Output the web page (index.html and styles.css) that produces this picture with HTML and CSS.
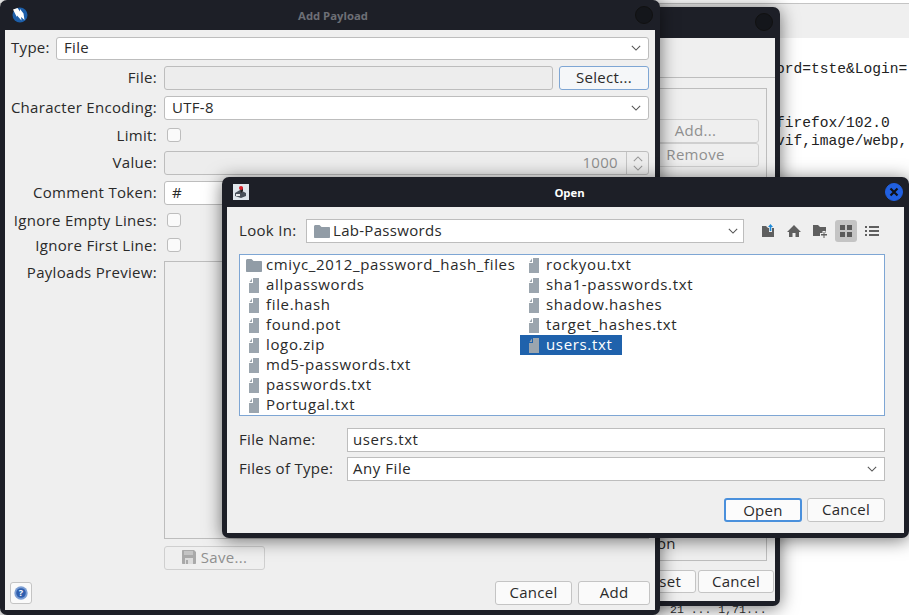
FILE: index.html
```html
<!DOCTYPE html>
<html>
  <head>
    <meta charset="utf-8">
    <title>Add Payload</title>
    <link rel="stylesheet" href="styles.css">
  </head>
  <body>
    <svg class="defs" width="0" height="0">
      <symbol id="i-file" viewBox="0 0 10 15">
        <path d="M4 0h6v15H0V5h4z" fill="#9ba5ae"/>
        <path d="M3 .5L.5 4H3z" fill="#9ba5ae"/>
      </symbol>
      <symbol id="i-folder" viewBox="0 0 16 13">
        <path d="M0 1.500C0 .7.7 0 1.500 0h4L7.500 2H15c.6 0 1 .4 1 1v9c0 .6-.4 1-1 1H1c-.6 0-1-.4-1-1z" fill="#919ca6"/>
      </symbol>
      <symbol id="i-chev" viewBox="0 0 12 7">
        <path d="M1 1l5 5 5-5" fill="none" stroke="#555" stroke-width="1.300"/>
      </symbol>
    </svg>

    <div class="editor">
      <div class="editor-top"></div>
      <pre class="editor-text">ord=tste&amp;Login=


firefox/102.0
vif,image/webp,</pre>
      <div class="editor-status">21 ... 1,71...</div>
    </div>

    <!-- window behind -->
    <div class="win win-back">
      <div class="titlebar">
        <span class="dot"></span>
      </div>
      <div class="back-body">
        <div class="back-top"></div>
        <div class="back-group">
          <div class="back-btns">
            <button class="btn off back-btn">Add...</button>
            <button class="btn off back-btn">Remove</button>
          </div>
          <div class="back-on">on</div>
        </div>
        <div class="back-foot">
          <button class="btn btn-reset">Reset</button>
          <button class="btn btn-back-cancel">Cancel</button>
        </div>
      </div>
    </div>

    <!-- add payload -->
    <div class="win win-add">
      <div class="titlebar">
        <svg class="logo" width="16" height="16" viewBox="0 0 16 16">
          <circle cx="8" cy="8" r="7.500" fill="#1d5ea8"/>
          <path d="M1 2.500L5.500 1l2.500 3.500L8 2l3.500 4.500 1 6.500-3.500-3 .5 3.500L5 8.500 4.800 10z" fill="#fff"/>
        </svg>
        <span class="title title-dim">Add Payload</span>
        <span class="dot"></span>
      </div>
      <div class="add-body">
        <div class="row-type">
          <label class="lbl-type">Type:</label>
          <div class="field combo">File<svg class="chev"><use href="#i-chev"/></svg></div>
        </div>
        <div class="form">
          <label class="lbl">File:</label>
          <div class="file-row">
            <div class="field off grow"></div>
            <button class="btn btn-select">Select...</button>
          </div>
          <label class="lbl">Character Encoding:</label>
          <div class="field combo">UTF-8<svg class="chev"><use href="#i-chev"/></svg></div>
          <label class="lbl lbl-check">Limit:</label>
          <div class="check-cell"><span class="check"></span></div>
          <label class="lbl">Value:</label>
          <div class="field off spin">
            <span class="spin-val">1000</span>
            <span class="spin-btns">
              <svg width="10" height="6" viewBox="0 0 12 7"><path d="M1 6l5-5 5 5" fill="none" stroke="#999" stroke-width="1.300"/></svg>
              <svg width="10" height="6" viewBox="0 0 12 7"><path d="M1 1l5 5 5-5" fill="none" stroke="#999" stroke-width="1.300"/></svg>
            </span>
          </div>
          <label class="lbl">Comment Token:</label>
          <div class="field">#</div>
          <label class="lbl lbl-check">Ignore Empty Lines:</label>
          <div class="check-cell"><span class="check"></span></div>
          <label class="lbl lbl-check">Ignore First Line:</label>
          <div class="check-cell"><span class="check"></span></div>
          <label class="lbl">Payloads Preview:</label>
          <div class="preview"></div>
          <span></span>
          <div>
            <button class="btn off btn-save">
              <svg width="14" height="14" viewBox="0 0 14 14">
                <path d="M0 1c0-.6.4-1 1-1h11l2 2v11c0 .6-.4 1-1 1H1c-.6 0-1-.4-1-1z" fill="#a9a9a9"/>
                <path d="M2 1h9v4H2z" fill="#c4c4c4"/>
                <path d="M3 8h8v6H3z" fill="#dcdcdc"/>
                <path d="M4 10h2v4H4z" fill="#a9a9a9"/>
              </svg>
              Save...
            </button>
          </div>
        </div>
        <div class="add-foot">
          <button class="btn btn-help">
            <svg width="14" height="14" viewBox="0 0 14 14">
              <circle cx="7" cy="7" r="6.700" fill="#7d9fd4"/>
              <circle cx="7" cy="7" r="4.800" fill="#2f5fae"/>
              <text x="7" y="10.300" class="help-q">?</text>
            </svg>
          </button>
          <span class="grow"></span>
          <button class="btn btn-cancel">Cancel</button>
          <button class="btn btn-add">Add</button>
        </div>
      </div>
    </div>

    <!-- file chooser -->
    <div class="win win-open">
      <div class="titlebar">
        <svg class="logo-java" width="16" height="16" viewBox="0 0 16 16">
          <rect width="16" height="16" fill="#dfe6ec"/>
          <path d="M2 9l5-3 6 3v3l-5 2-6-2z" fill="#4a525c"/>
          <path d="M3 10h4v2H3z" fill="#e8eaec"/>
          <path d="M7 5l2-2 1 1v3l-2 2z" fill="#222"/>
          <circle cx="8" cy="4" r="2" fill="#d8202a"/>
        </svg>
        <span class="title title-open">Open</span>
        <span class="dot dot-close">
          <svg width="10" height="10" viewBox="0 0 10 10"><path d="M1.500 1.500l7 7m0-7l-7 7" stroke="#101218" stroke-width="2.200"/></svg>
        </span>
      </div>
      <div class="open-body">
        <div class="look-row">
          <label class="lbl-look">Look In:</label>
          <div class="field combo combo-look">
            <svg class="ic-folder"><use href="#i-folder"/></svg>Lab-Passwords<svg class="chev"><use href="#i-chev"/></svg>
          </div>
          <div class="tools">
            <svg class="tool" viewBox="0 0 16 16">
              <path d="M2 3h4l2 2h6v9H2z" fill="#5f5f5f"/>
              <path d="M10.500 0L14 4h-2v5H9V4H7z" fill="#efefef"/>
              <path d="M10.500 1L13 4h-1.700v4H9.700V4H8z" fill="#1f8ad8"/>
            </svg>
            <svg class="tool" viewBox="0 0 16 16">
              <path d="M8 2L1 9h2v5h3.500v-4h3v4H13V9h2z" fill="#5f5f5f"/>
            </svg>
            <svg class="tool" viewBox="0 0 16 16">
              <path d="M1 2h5l2 2h6v9H1z" fill="#5f5f5f"/>
              <path d="M10.500 8h3v2H16v3.500h-2.500V16h-3v-2.500H8V10h2.500z" fill="#efefef"/>
              <path d="M11.500 9h1v2h2.500v1.500h-2.500V15h-1v-2.500H9V11h2.500z" fill="#5f5f5f"/>
            </svg>
            <span class="tool-on">
              <svg class="tool" viewBox="0 0 16 16">
                <path d="M2 2h5v5H2zM9 2h5v5H9zM2 9h5v5H2zM9 9h5v5H9z" fill="#5a5a5a"/>
              </svg>
            </span>
            <svg class="tool" viewBox="0 0 16 16">
              <path d="M1 3h2v2H1zM5 3h10v2H5zM1 7h2v2H1zM5 7h10v2H5zM1 11h2v2H1zM5 11h10v2H5z" fill="#5f5f5f"/>
            </svg>
          </div>
        </div>
        <div class="files">
          <div class="item"><svg class="ic-dir"><use href="#i-folder"/></svg>cmiyc_2012_password_hash_files</div>
          <div class="item"><svg class="ic-file"><use href="#i-file"/></svg>allpasswords</div>
          <div class="item"><svg class="ic-file"><use href="#i-file"/></svg>file.hash</div>
          <div class="item"><svg class="ic-file"><use href="#i-file"/></svg>found.pot</div>
          <div class="item"><svg class="ic-file"><use href="#i-file"/></svg>logo.zip</div>
          <div class="item"><svg class="ic-file"><use href="#i-file"/></svg>md5-passwords.txt</div>
          <div class="item"><svg class="ic-file"><use href="#i-file"/></svg>passwords.txt</div>
          <div class="item"><svg class="ic-file"><use href="#i-file"/></svg>Portugal.txt</div>
          <div class="item"><svg class="ic-file"><use href="#i-file"/></svg>rockyou.txt</div>
          <div class="item"><svg class="ic-file"><use href="#i-file"/></svg>sha1-passwords.txt</div>
          <div class="item"><svg class="ic-file"><use href="#i-file"/></svg>shadow.hashes</div>
          <div class="item"><svg class="ic-file"><use href="#i-file"/></svg>target_hashes.txt</div>
          <div class="item selected"><svg class="ic-file"><use href="#i-file"/></svg>users.txt</div>
        </div>
        <div class="name-grid">
          <label>File Name:</label>
          <div class="field field-plain">users.txt</div>
          <label>Files of Type:</label>
          <div class="field combo field-plain">Any File<svg class="chev"><use href="#i-chev"/></svg></div>
        </div>
        <div class="open-foot">
          <button class="btn btn-open">Open</button>
          <button class="btn btn-open-cancel">Cancel</button>
        </div>
      </div>
    </div>
  </body>
</html>
```

FILE: styles.css
```css
* {
  box-sizing: border-box;
}
html, body {
  margin: 0;
  height: 100%;
}
body {
  position: relative;
  width: 909px;
  height: 615px;
  overflow: hidden;
  background: #fff;
  font-family: "Open Sans", sans-serif;
  font-size: 15px;
  letter-spacing: 0.3px;
  color: #2a2a2a;
}
.defs {
  position: absolute;
}

/* editor behind everything */
.editor {
  height: 100%;
  padding-top: 3px;
}
.editor-top {
  height: 35px;
  border-top: 1px solid #c4c4c4;
  background: #efefef;
}
.editor-text {
  margin: 22px 0 0 776px;
  font-family: "Liberation Mono", monospace;
  font-size: 14.6px;
  letter-spacing: 0;
  line-height: 18px;
  color: #222;
}
.editor-status {
  position: absolute;
  left: 670px;
  top: 603px;
  font-family: "Liberation Mono", monospace;
  font-size: 11.5px;
  letter-spacing: 0;
  color: #333;
}

/* windows */
.win {
  position: absolute;
  display: flex;
  flex-direction: column;
  background: #1d1f27;
  border-radius: 7px;
  padding: 0 5px 5px;
  box-shadow: 0 2px 18px rgba(0, 0, 0, 0.55);
}
.win-back {
  left: 400px;
  top: 7px;
  width: 380px;
  height: 599px;
}
.win-add {
  left: 0;
  top: 0;
  width: 660px;
  height: 615px;
}
.win-open {
  left: 222px;
  top: 177px;
  width: 687px;
  height: 361px;
}
.titlebar {
  flex: none;
  position: relative;
  height: 30px;
  display: flex;
  align-items: center;
  justify-content: center;
}
.win-back .titlebar {
  height: 31px;
}
.title {
  font-size: 11.3px;
  font-weight: 700;
  letter-spacing: 0;
  color: #fff;
}
.title-dim {
  margin-left: 6px;
  color: #6d6f76;
}
.title-open {
  margin-left: 8px;
}
.dot {
  position: absolute;
  right: 2px;
  top: 6px;
  width: 18px;
  height: 18px;
  border-radius: 50%;
  background: #14161b;
  border: 1px solid #111;
  display: flex;
  align-items: center;
  justify-content: center;
}
.dot-close {
  background: #2160e0;
  border-color: #2160e0;
  right: 1px;
}
.logo {
  position: absolute;
  left: 7px;
  top: 7px;
}
.logo-java {
  position: absolute;
  left: 6px;
  top: 7px;
}

/* shared controls */
.field {
  height: 24px;
  display: flex;
  align-items: center;
  padding: 0 7px 2px;
  background: #fff;
  border: 1px solid #bdbdbd;
  border-radius: 3px;
}
.field.off {
  background: #ededed;
}
.combo {
  justify-content: space-between;
}
.chev {
  width: 10px;
  height: 6px;
  flex: none;
  position: relative;
  top: 1px;
}
.btn {
  height: 24px;
  padding: 0 0 2px;
  font: inherit;
  letter-spacing: inherit;
  color: #2a2a2a;
  background: #fafafa;
  border: 1px solid #c4c4c4;
  border-radius: 3px;
}
.btn.off {
  color: #8f8f8f;
  background: #efefef;
  border-color: #cfcfcf;
}
.grow {
  flex: 1;
}

/* add payload */
.add-body {
  flex: 1;
  display: flex;
  flex-direction: column;
  background: #efefef;
  padding: 7px 5px 5px;
}
.row-type {
  display: flex;
  align-items: center;
  padding-right: 1px;
}
.lbl-type {
  width: 46px;
  padding: 0 0 3px 1px;
}
.row-type .combo {
  flex: 1;
  height: 23px;
  padding-bottom: 3px;
}
.form {
  display: grid;
  grid-template-columns: 147px 485px;
  column-gap: 7px;
  row-gap: 6px;
  margin-top: 6px;
}
.lbl {
  text-align: right;
  line-height: 22px;
  white-space: nowrap;
}
.lbl-check {
  line-height: 18px;
}
.file-row {
  display: flex;
  gap: 6px;
}
.btn-select {
  width: 90px;
  background: #f5f7f9;
  border-color: #7ea6d4;
}
.check-cell {
  height: 19px;
  padding: 2px 0 0 3px;
}
.check {
  display: block;
  width: 14px;
  height: 14px;
  background: #fafafa;
  border: 1px solid #bdbdbd;
  border-radius: 3px;
}
.spin {
  justify-content: flex-end;
  padding: 0;
  color: #8f8f8f;
}
.spin-val {
  padding: 0 8px 2px 0;
}
.spin-btns {
  align-self: stretch;
  width: 22px;
  border-left: 1px solid #c4c4c4;
  display: flex;
  flex-direction: column;
  align-items: center;
  justify-content: center;
  gap: 3px;
}
.preview {
  height: 278px;
  background: #efefef;
  border: 1px solid #bdbdbd;
}
.btn-save {
  margin-top: 1px;
  width: 101px;
  display: flex;
  align-items: center;
  justify-content: center;
  gap: 5px;
}
.add-foot {
  display: flex;
  align-items: center;
  gap: 6px;
  margin-top: 11px;
}
.btn-help {
  width: 22px;
  height: 22px;
  padding: 0;
  display: flex;
  align-items: center;
  justify-content: center;
}
.help-q {
  font-size: 9px;
  font-weight: 700;
  fill: #fff;
  text-anchor: middle;
}
.btn-cancel {
  width: 77px;
}
.btn-add {
  width: 72px;
}

/* window behind */
.back-body {
  flex: 1;
  display: flex;
  flex-direction: column;
  align-items: flex-end;
  background: #efefef;
}
.back-top {
  align-self: stretch;
  height: 40px;
  border-bottom: 1px solid #bdbdbd;
}
.back-group {
  width: 360px;
  height: 473px;
  margin: 10px 8px 0 0;
  border: 1px solid #bdbdbd;
  border-left: 0;
  padding: 30px 7px 0 0;
  display: flex;
  flex-direction: column;
  align-items: flex-end;
  justify-content: space-between;
}
.back-btns {
  display: flex;
  flex-direction: column;
}
.back-btn {
  width: 127px;
}
.back-on {
  align-self: stretch;
  padding-left: 250px;
  padding-bottom: 7px;
}
.back-foot {
  display: flex;
  gap: 2px;
  margin: 9px 1px 0 0;
}
.back-foot .btn {
  height: 23px;
}
.btn-reset {
  width: 70px;
}
.btn-back-cancel {
  width: 76px;
}

/* file chooser */
.open-body {
  flex: 1;
  display: flex;
  flex-direction: column;
  background: #efefef;
  padding: 12px 19px 0 12px;
}
.look-row {
  display: flex;
  align-items: center;
}
.lbl-look {
  width: 67px;
  padding-bottom: 2px;
}
.combo-look {
  width: 438px;
  justify-content: flex-start;
  border-radius: 0;
}
.combo-look .chev {
  margin-left: auto;
  margin-right: -2px;
}
.ic-folder {
  width: 16px;
  height: 13px;
  margin-right: 3px;
  position: relative;
  top: 1px;
}
.tools {
  display: flex;
  align-items: center;
  gap: 10px;
  margin-left: 16px;
}
.tool {
  display: block;
  width: 16px;
  height: 16px;
}
.tool-on {
  padding: 3px;
  margin: -3px;
  background: #c4c4c4;
  border-radius: 3px;
}
.files {
  height: 162px;
  margin-top: 11px;
  display: grid;
  grid-template-rows: repeat(8, 20px);
  grid-auto-flow: column;
  grid-template-columns: 280px auto;
  justify-content: start;
  justify-items: start;
  background: #fff;
  border: 1px solid #7ea6d4;
  letter-spacing: 0.65px;
}
.item {
  display: flex;
  align-items: center;
  height: 20px;
  padding: 0 10px 3px 26px;
  position: relative;
  white-space: nowrap;
}
.item svg {
  position: absolute;
  top: 3px;
}
.ic-file {
  left: 9px;
  width: 10px;
  height: 15px;
}
.ic-dir {
  left: 6px;
  width: 16px;
  height: 13px;
}
.item .ic-dir {
  top: 4px;
}
.selected {
  background: #1f62ac;
  color: #fff;
}
.name-grid {
  display: grid;
  grid-template-columns: 108px 538px;
  row-gap: 5px;
  align-items: center;
  margin-top: 12px;
}
.name-grid label {
  padding-bottom: 2px;
}
.field-plain {
  border-radius: 0;
  padding-left: 5px;
  letter-spacing: 0.55px;
}
.open-foot {
  display: flex;
  justify-content: flex-end;
  gap: 5px;
  margin-top: 17px;
}
.btn-open {
  width: 78px;
  background: #fcfcfc;
  border: 2px solid #4a90dc;
}
.btn-open-cancel {
  width: 78px;
}
```
